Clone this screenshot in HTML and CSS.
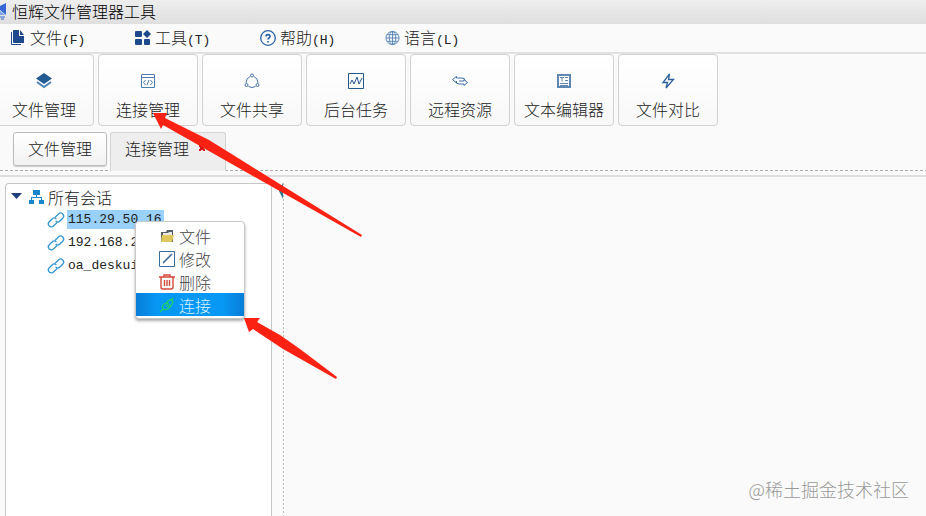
FILE: index.html
```html
<!DOCTYPE html>
<html lang="zh-CN">
<head>
    <meta charset="UTF-8">
    <meta name="viewport" content="width=device-width, initial-scale=1.0">
    <title>恒辉文件管理器工具</title>
    <link rel="stylesheet" href="styles.css">
</head>
<body>
    <header class="titlebar">
        <svg class="logo" width="7" height="18" viewBox="0 0 7 18"><path d="M0 4L6 1V13L0 8Z" fill="#3568d4"/><path d="M0 9L5 13H0Z" fill="#79a3ee"/><path d="M0 15H5M1 17H4" stroke="#3568d4"/></svg>
        <span>恒辉文件管理器工具</span>
    </header>

    <nav class="menubar">
        <button class="menu">
            <svg width="16" height="16" viewBox="0 0 16 16" fill="#1d4a8c"><path d="M1 2h1v12h9v1H2q-1 0-1-1z"/><path d="M3 0h6v6h5v7H4q-1 0-1-1z"/><path d="M10 0l4 5h-4z"/></svg>
            <span>文件<span class="key">(F)</span></span>
        </button>
        <button class="menu">
            <svg width="16" height="16" viewBox="0 0 16 16" fill="#1d4a8c"><rect x="0" y="1" width="7" height="6" rx="1"/><path d="M12 0l4 4-4 4-4-4z"/><rect x="0" y="9" width="7" height="6" rx="1"/><rect x="9" y="9" width="6" height="6" rx="1"/></svg>
            <span>工具<span class="key">(T)</span></span>
        </button>
        <button class="menu">
            <svg width="16" height="16" viewBox="0 0 16 16" fill="none" stroke="#2a62a8"><circle cx="8" cy="8" r="7.3" stroke-width="1.3"/><path d="M6 6.5C6 4 10 4 10 6.5C10 8 8 8 8 9.5M8 11v1.4" stroke-width="1.6"/></svg>
            <span>帮助<span class="key">(H)</span></span>
        </button>
        <button class="menu">
            <svg width="15" height="16" viewBox="0 0 16 16" fill="none" stroke="#5584b8"><circle cx="8" cy="8" r="7"/><ellipse cx="8" cy="8" rx="3.5" ry="7"/><path d="M8 1v14M1 8h14M2 4.5h12M2 11.5h12"/></svg>
            <span>语言<span class="key">(L)</span></span>
        </button>
    </nav>

    <div class="toolbar">
        <button class="tool">
            <svg width="16" height="16" viewBox="0 0 16 16"><path d="M8 0l8 5.5-8 5.5-8-5.5z" fill="#245b92"/><path d="M1 9l7 5 7-5" fill="none" stroke="#4d82b5" stroke-width="2"/></svg>
            文件管理
        </button>
        <button class="tool">
            <svg width="16" height="16" viewBox="0 0 16 16" fill="none" stroke="#4c7fae"><path d="M1.5 1.5h13v13h-13zM1.5 4.5h13"/><path d="M5.5 7L3.5 9.5l2 2.5M10.5 7l2 2.5-2 2.5M9 7l-2 5"/></svg>
            连接管理
        </button>
        <button class="tool">
            <svg width="16" height="16" viewBox="0 0 16 16" fill="none" stroke="#4575aa"><circle cx="8" cy="2.5" r="1.5"/><circle cx="2.5" cy="12" r="1.5"/><circle cx="13.5" cy="12" r="1.5"/><path d="M6 3.5Q2 5.5 2 10M10 3.5Q14 5.5 14 10M4.5 13.5Q8 15.5 11.5 13.5"/></svg>
            文件共享
        </button>
        <button class="tool">
            <svg width="16" height="16" viewBox="0 0 16 16" fill="none" stroke="#24588f"><path d="M.5.5h15v15H.5z"/><path d="M2 11l2-4 2 4 3-7 2 7 3-6"/></svg>
            后台任务
        </button>
        <button class="tool">
            <svg width="16" height="16" viewBox="0 0 16 16" fill="none" stroke="#3e6fa5"><path d="M13 7.5Q13 5 10 5H4.500V3.500L.5 6.500l4 3.500V8"/><path d="M4 8q0 3 3 3h5v1.500L15.500 9.500 12 6.500V8H7"/></svg>
            远程资源
        </button>
        <button class="tool">
            <svg width="16" height="16" viewBox="0 0 16 16" fill="none" stroke="#5f86b0"><path d="M2 2h12v12H2z" stroke-width="2"/><path d="M4 4.5h4M6 4.5v4M9 4.5h3M9 7.5h3M4 10.5h8M4 12.5h8"/></svg>
            文本编辑器
        </button>
        <button class="tool">
            <svg width="16" height="16" viewBox="0 0 16 16" fill="none" stroke="#2c5f9d" stroke-width="1.3"><path d="M9.500 1L3 9.500h4.500L6 15l7.500-8.500H8.500z"/></svg>
            文件对比
        </button>
    </div>

    <div class="tabs">
        <div class="tab"><button class="tab-name">文件管理</button></div>
        <div class="tab active">
            <button class="tab-name">连接管理</button>
            <button class="tab-close" aria-label="关闭"><svg width="6" height="6" viewBox="0 0 6 6"><path d="M0 0l6 6M6 0L0 6" stroke="#d40000" stroke-width="2"/></svg></button>
        </div>
    </div>

    <main class="workspace">
        <aside class="sessions">
            <div class="tree-root">
                <svg width="12" height="7" viewBox="0 0 12 7"><path d="M0 0h11L5.500 6z" fill="#1e3f7c"/></svg>
                <svg class="root-icon" width="15" height="14" viewBox="0 0 15 14" fill="#1687cc"><path d="M4 0h7v5H8v2h5v3h2v4h-5v-4h2V8H3v2h2v4H0v-4h2V7h5V5H4z"/></svg>
                <span>所有会话</span>
            </div>
            <ul class="tree">
                <li class="session selected">
                    <svg class="link-icon" width="16" height="16" viewBox="0 0 16 16"><g transform="rotate(-45 8 8)" fill="none" stroke="#3597d3" stroke-width="1.3"><path d="M7 10.5H2a3 3 0 0 1 0-6h4a3 3 0 0 1 3 3"/><path d="M9 5.5h5a3 3 0 0 1 0 6h-4a3 3 0 0 1-3-3"/></g></svg>
                    <span class="session-name">115.29.50.16</span>
                </li>
                <li class="session">
                    <svg class="link-icon" width="16" height="16" viewBox="0 0 16 16"><g transform="rotate(-45 8 8)" fill="none" stroke="#3597d3" stroke-width="1.3"><path d="M7 10.5H2a3 3 0 0 1 0-6h4a3 3 0 0 1 3 3"/><path d="M9 5.5h5a3 3 0 0 1 0 6h-4a3 3 0 0 1-3-3"/></g></svg>
                    <span class="session-name">192.168.2</span>
                </li>
                <li class="session">
                    <svg class="link-icon" width="16" height="16" viewBox="0 0 16 16"><g transform="rotate(-45 8 8)" fill="none" stroke="#3597d3" stroke-width="1.3"><path d="M7 10.5H2a3 3 0 0 1 0-6h4a3 3 0 0 1 3 3"/><path d="M9 5.5h5a3 3 0 0 1 0 6h-4a3 3 0 0 1-3-3"/></g></svg>
                    <span class="session-name">oa_deskui</span>
                </li>
            </ul>
        </aside>
        <div class="splitter">
            <svg width="5" height="16" viewBox="0 0 5 16"><path d="M4 0v16L0 8z" fill="#287a91"/></svg>
        </div>
        <section class="content"></section>
    </main>

    <div class="context-menu">
        <button class="item">
            <svg width="16" height="16" viewBox="0 0 16 16"><path d="M2 14V4h5l1-2h6v12z" fill="#555f63"/><path d="M4 5h5l1-1h3v3H4z" fill="#e8e8e2"/><path d="M3 7h12l-2 7H2z" fill="#dfc75b"/></svg>
            文件
        </button>
        <button class="item">
            <svg width="16" height="16" viewBox="0 0 16 16" fill="none" stroke="#3b6b9d"><path d="M.5.5h15v15H.5z"/><path d="M4 12l9-9" stroke-width="1.6"/></svg>
            修改
        </button>
        <button class="item">
            <svg width="16" height="16" viewBox="0 0 16 16" fill="none" stroke="#d4493b" stroke-width="1.4"><path d="M0 3h16M5 3V1h6v2M2 3v10q0 2 2 2h8q2 0 2-2V3M5.500 6v6M8 6v6M10.500 6v6"/></svg>
            删除
        </button>
        <button class="item current">
            <svg width="16" height="16" viewBox="0 0 16 16" fill="none" stroke="#22cf67" stroke-width="1.2"><path d="M1 15l3-3M12 4l2-3M4 12q-2-5 4-6l3 3q-2 5-7 3zM7 7l2-3q4-3 5 1l-2 4-2 2M7 8l2 2"/></svg>
            连接
        </button>
    </div>

    <svg class="arrow arrow-top" width="212" height="126" viewBox="0 0 212 126"><path d="M1 1L15 1 13 6 57 28 78 41 210 123 209 125 71 47 41 30 11 13 9 17z" fill="#fb2213"/></svg>
    <svg class="arrow arrow-bottom" width="96" height="64" viewBox="0 0 96 64"><path d="M1 2L17 2 14 6 37 19 57 33 94 61 93 63 40 33 10 13 6 16z" fill="#fb2213"/></svg>
    <div class="watermark">@稀土掘金技术社区</div>
</body>
</html>
```

FILE: styles.css
```css
* {
    box-sizing: border-box;
}

body {
    margin: 0;
    height: 100vh;
    display: flex;
    flex-direction: column;
    overflow: hidden;
    position: relative;
    background: #fafafa;
    color: #222;
    font: 300 16px/20px "Noto Sans CJK SC", sans-serif;
}

button {
    padding: 0;
    border: none;
    background: none;
    color: inherit;
    font: inherit;
    white-space: nowrap;
}

svg {
    flex: none;
}

.titlebar {
    height: 24px;
    display: flex;
    align-items: center;
    gap: 5px;
    padding-bottom: 2px;
    background: linear-gradient(#eee, #dfdfdf);
    color: #000;
}

.menubar {
    height: 30px;
    display: flex;
    align-items: center;
    padding: 0 0 1px 10px;
    border-bottom: 2px solid #e2e2e2;
}

.menu {
    width: 125px;
    display: flex;
    align-items: center;
    gap: 4px;
}

.key {
    font: 13px "Liberation Mono", monospace;
}

.toolbar {
    display: flex;
    gap: 4px;
    margin-left: -6px;
}

.tool {
    width: 100px;
    height: 72px;
    display: flex;
    flex-direction: column;
    align-items: center;
    justify-content: flex-end;
    gap: 10px;
    padding-bottom: 6px;
    border: 1px solid #d2d2d2;
    border-radius: 4px;
    background: linear-gradient(#fff, #f8f8f8);
}

.tabs {
    height: 45px;
    display: flex;
    align-items: flex-start;
    gap: 3px;
    padding: 6px 0 0 13px;
    margin-bottom: 4px;
    background: repeating-linear-gradient(90deg, #aaa 0 3px, transparent 3px 5px) 0 100% / 100% 1px no-repeat;
}

.tab {
    width: 94px;
    height: 34px;
    display: flex;
    align-items: center;
    justify-content: center;
    padding-bottom: 2px;
    border: 1px solid #bcbcbc;
    border-radius: 3px;
    background: linear-gradient(#fff, #f2f2f2);
    box-shadow: 0 1px 1px #ccc;
}

.tab.active {
    width: 116px;
    height: 39px;
    justify-content: flex-start;
    gap: 10px;
    padding: 0 0 8px 14px;
    border-color: #d4d4d4;
    border-bottom: none;
    border-radius: 3px 3px 0 0;
    background: #eee;
    box-shadow: none;
}

.tab-close {
    display: flex;
}

.workspace {
    flex: 1;
    min-height: 0;
    display: flex;
    padding: 6px 0 0 5px;
    border-top: 2px solid #dedede;
}

.sessions {
    width: 267px;
    padding: 1px 0 0 5px;
    border: 1px solid #c6c6c6;
    border-bottom: none;
    border-radius: 4px 4px 0 0;
    background: #fff;
}

.tree-root {
    height: 23px;
    display: flex;
    align-items: center;
}

.root-icon {
    margin: 0 4px 0 6px;
}

.tree {
    list-style: none;
    margin: 0;
    padding: 0 0 0 37px;
}

.session {
    height: 23px;
    display: flex;
    align-items: center;
    gap: 3px;
}

.link-icon {
    overflow: visible;
}

.session-name {
    padding: 0 2px 0 1px;
    font: 13px/19px "Liberation Mono", monospace;
}

.selected .session-name {
    background: #99d1fa;
}

.splitter {
    width: 12px;
    display: flex;
    justify-content: flex-end;
    background: repeating-linear-gradient(#bbb 0 2px, transparent 2px 4px) 100% 0 / 1px 100% no-repeat;
}

.content {
    flex: 1;
}

.context-menu {
    position: absolute;
    left: 135px;
    top: 221px;
    width: 110px;
    padding: 2px 0;
    border: 1px solid #c8c8c8;
    border-radius: 4px;
    background: #fff;
    box-shadow: 0 2px 3px #aaa;
    color: #444;
}

.item {
    width: 100%;
    height: 23px;
    display: flex;
    align-items: center;
    gap: 4px;
    padding-left: 23px;
}

.item.current {
    background: linear-gradient(90deg, #087ed8, #0798f5 20%, #0798f5 80%, #087ed8);
    color: #d6f1ff;
}

.arrow {
    position: absolute;
    pointer-events: none;
}

.arrow-top {
    left: 152px;
    top: 112px;
}

.arrow-bottom {
    left: 243px;
    top: 316px;
}

.watermark {
    position: absolute;
    right: 17px;
    bottom: 14px;
    color: #999;
    font-size: 18px;
    line-height: 26px;
}
```
